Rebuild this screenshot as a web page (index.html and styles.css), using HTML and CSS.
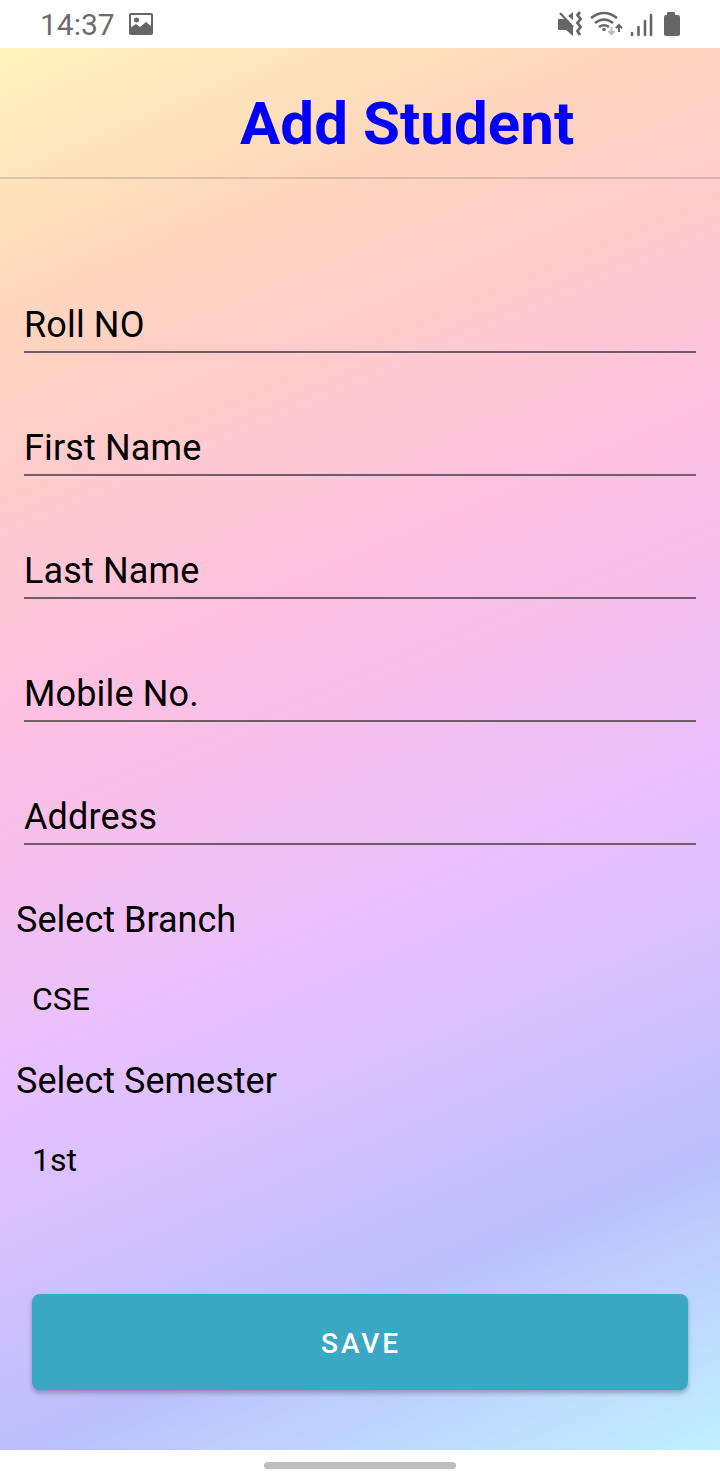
FILE: index.html
```html
<!DOCTYPE html>
<html lang="en">
<head>
<meta charset="utf-8">
<title>Add Student</title>
<link rel="stylesheet" href="styles.css">
</head>
<body>
<div class="screen">
  <header class="status">
    <span class="clock">14:37</span>
    <svg class="photo" width="24" height="22" viewBox="0 0 24 22"><rect x="1" y="1" width="22" height="20" rx="1" fill="none" stroke="#666" stroke-width="2"/><circle cx="7.500" cy="7" r="2.500" fill="#666"/><path d="M1 15l6-4 4 3 6-5 6 5v7H1z" fill="#666"/></svg>
    <svg class="indicators" width="124" height="26" viewBox="0 0 124 26" fill="none" stroke="#666">
      <path d="M0 8h7L15 15v10l-7-6H1q-1 0-1-1zM10 5l5-4v8z" fill="#666" stroke="none"/>
      <path d="M2 2l13 14" stroke-width="2.200"/>
      <path d="M22 1l-2.500 3 3 4-3 4 3 4-3 4 2.500 4" stroke-width="2.800"/>
      <path d="M33 7q13-10 26 0M37 12q9-7 18 0M41 16q5-3.500 10 0" stroke-width="2.600"/>
      <circle cx="46" cy="18.500" r="1.800" fill="#666" stroke="none"/>
      <path d="M53.500 16v7M50.500 20l3 3 3-3" stroke="#bbb" stroke-width="2"/>
      <path d="M61 21v-7M58 17l3-3 3 3" stroke-width="2"/>
      <path d="M74 22v2M80.500 16v8M87 10v14M93 4v20" stroke-width="2.600" stroke-linecap="round"/>
      <path d="M110 1h6q1 0 1 1v2h3q2 0 2 2v17q0 2-2 2h-12q-2 0-2-2V6q0-2 2-2h1V2q0-1 1-1z" fill="#666" stroke="none"/>
    </svg>
  </header>
  <main class="page">
    <h1 class="title">Add Student</h1>
    <form class="form">
      <div class="field">Roll NO</div>
      <div class="field">First Name</div>
      <div class="field">Last Name</div>
      <div class="field">Mobile No.</div>
      <div class="field">Address</div>
    </form>
    <section class="choices">
      <div class="label">Select Branch</div>
      <div class="value">CSE</div>
      <div class="label">Select Semester</div>
      <div class="value">1st</div>
    </section>
    <button class="save" type="button">SAVE</button>
  </main>
  <footer class="navbar"><div class="handle"></div></footer>
</div>
</body>
</html>
```
FILE: styles.css
```css
* { box-sizing: border-box; }
body { margin: 0; font-family: Roboto, sans-serif; color: #000; }
.screen { width: 720px; height: 1480px; display: flex; flex-direction: column; background: #fff; }
.status { height: 48px; display: flex; align-items: center; padding: 0 38px 0 40px; color: #6c6c6c; }
.clock { font-size: 30px; line-height: 48px; padding-top: 1px; width: 89px; height: 48px; }
.indicators { margin-left: auto; }
.page {
  height: 1402px; display: flex; flex-direction: column;
  background: linear-gradient(157deg, #fff4bd 0%, #fed5bd 16%, #ffc0e0 39%, #e8c0ff 61.500%, #bcc0fc 82.500%, #c0f0ff 100%);
}
.title {
  margin: 0; height: 131px; padding: 41px 0 0 240px; border-bottom: 2px solid rgba(0,0,0,.13);
  font-size: 60px; line-height: 70px; font-weight: 700; color: #00f; letter-spacing: .05px;
}
.form { padding: 51px 24px 0; }
.field {
  height: 123px; padding-top: 72px; border-bottom: 2px solid #735c69;
  font-size: 36px; line-height: 46px; letter-spacing: .14px;
}
.choices { padding: 48px 16px 0; }
.label { height: 54px; font-size: 36px; line-height: 54px; letter-spacing: .02px; }
.value { height: 107px; padding: 25px 16px 0; font-size: 32px; line-height: 54px; }
.save {
  height: 96px; margin: 79px 32px 0; border: 0; border-radius: 8px;
  background: #3ba8c3; color: #fff; font: 500 28px/98px Roboto, sans-serif; letter-spacing: 2.900px; padding: 1px 0 0 2px;
  box-shadow: 0 3px 5px rgba(0,0,0,.28);
}
.navbar { height: 30px; padding-top: 11.500px; }
.handle { width: 192px; height: 7px; margin: 0 auto; border-radius: 4px; background: #bfbfbf; }
```
